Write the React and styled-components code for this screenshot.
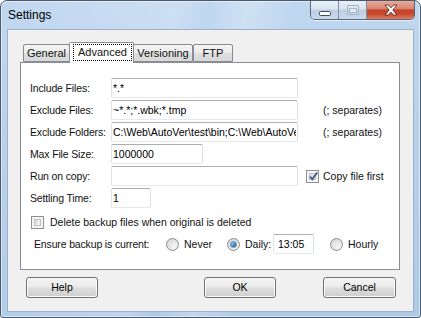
import styled, { createGlobalStyle } from 'styled-components';

const GlobalStyle = createGlobalStyle`
  html, body {
    margin: 0;
    padding: 0;
    background: #ffffff;
  }
  body {
    font-family: "Liberation Sans", Arial, sans-serif;
    color: #000;
  }
  * { box-sizing: border-box; }
`;

const Window = styled.div`
  width: 421px;
  height: 318px;
  display: flex;
  flex-direction: column;
  border: 1px solid #4a5b70;
  border-radius: 7px 7px 3px 3px;
  padding: 0 6px 5px 6px;
  background:
    linear-gradient(100deg, rgba(255,255,255,0) 0%, rgba(255,255,255,0.2) 38%, rgba(255,255,255,0) 44%, rgba(255,255,255,0.25) 52%, rgba(255,255,255,0) 62%),
    linear-gradient(180deg, #c0d7f0 0%, #b8d1eb 40%, #aec9e6 100%);
  box-shadow: inset 0 0 0 1px rgba(255, 255, 255, 0.5);
`;

const TitleBar = styled.div`
  height: 28px;
  display: flex;
  align-items: flex-start;
`;

const Title = styled.div`
  padding: 6px 0 0 1px;
  font-size: 12px;
  line-height: 16px;
  color: #000;
`;

const CaptionButtons = styled.div`
  margin-left: auto;
  margin-right: -1px;
  display: flex;
  height: 19px;
  border: 1px solid #56677d;
  border-top: none;
  border-radius: 0 0 5px 5px;
  overflow: hidden;
  box-shadow: 0 1px 0 rgba(255, 255, 255, 0.6);
`;

const CaptionButton = styled.div`
  width: ${p => p.$w}px;
  height: 100%;
  display: flex;
  align-items: center;
  justify-content: center;
  border-left: ${p => (p.$first ? 'none' : '1px solid #7d8fa6')};
  background: ${p =>
    p.$close
      ? 'linear-gradient(180deg, #e9ab9c 0%, #d98672 42%, #c6432a 50%, #c9492d 72%, #e07c5c 100%)'
      : 'linear-gradient(180deg, #eaf0f7 0%, #d9e3ef 45%, #bfcfe1 50%, #c9d8ea 100%)'};
`;

const Client = styled.div`
  flex: 1;
  display: flex;
  flex-direction: column;
  background: #f0f0f0;
  border: 1px solid #9db1c9;
  padding: 12px 13px 13px 12px;
`;

const TabRow = styled.div`
  height: 20px;
  display: flex;
  align-items: flex-end;
  padding-left: 3px;
  position: relative;
  z-index: 1;
`;

const Tab = styled.div`
  width: ${p => p.$w}px;
  height: ${p => (p.$active ? 21 : 18)}px;
  margin: 0 ${p => (p.$active ? -1 : 0)}px ${p => (p.$active ? -1 : 0)}px ${p => (p.$active ? -1 : 0)}px;
  display: flex;
  align-items: ${p => (p.$active ? 'stretch' : 'center')};
  justify-content: center;
  padding: ${p => (p.$active ? '1px 1px 2px 3px' : '0 0 1px 0')};
  border: 1px solid #898c95;
  border-bottom: ${p => (p.$active ? 'none' : '1px solid #898c95')};
  border-radius: 2px 2px 0 0;
  background: ${p =>
    p.$active ? '#ffffff' : 'linear-gradient(180deg, #f4f4f4 0%, #ebebeb 50%, #dfdfdf 51%, #d8d8d8 100%)'};
  position: relative;
  z-index: ${p => (p.$active ? 2 : 1)};
  font-size: 11px;
  line-height: 14px;
  color: #111;
`;

const FocusRing = styled.span`
  flex: 1;
  display: flex;
  align-items: center;
  justify-content: center;
  border: 1px dotted #000;
  padding-bottom: 1px;
`;

const Panel = styled.div`
  height: 208px;
  display: flex;
  flex-direction: column;
  background: #ffffff;
  border: 1px solid #898c95;
  padding: 15px 0 0 9px;
`;

const Row = styled.div`
  height: 20px;
  display: flex;
  align-items: center;
  margin-bottom: 2px;
  font-size: 10.5px;
  color: #111;
`;

const Label = styled.span`
  width: ${p => p.$w || 81}px;
  margin-left: ${p => p.$ml || 0}px;
  flex-shrink: 0;
  white-space: nowrap;
  letter-spacing: -0.15px;
`;

const TextBox = styled.input`
  width: ${p => p.$w}px;
  height: 20px;
  flex-shrink: 0;
  border: 1px solid;
  border-color: #abadb3 #dbdfe6 #e3e9ef #e2e3ea;
  border-radius: 2px;
  padding: 0 1px 0 ${p => p.$pl || 1}px;
  font-family: "Liberation Sans", Arial, sans-serif;
  font-size: 10.5px;
  color: #000;
  background: #fff;
  outline: none;
`;

const Aside = styled.span`
  margin-left: ${p => p.$ml}px;
  white-space: nowrap;
`;

const CheckRow = styled.label`
  height: 16px;
  margin-top: ${p => p.$mt || 0}px;
  margin-left: ${p => p.$ml || 0}px;
  display: flex;
  align-items: center;
  gap: ${p => p.$gap || 6}px;
  font-size: 10.5px;
  color: #111;
  white-space: nowrap;
`;

const Box = styled.span`
  width: 13px;
  height: 13px;
  flex-shrink: 0;
  border: 1px solid #8e8f8f;
  background: #f4f4f4;
  padding: 2px;
  display: flex;
`;

const BoxInner = styled.span`
  flex: 1;
  position: relative;
  background: linear-gradient(135deg, #d3d6db 0%, #e8eaec 55%, #f9f9f9 100%);
  border: 1px solid #c0c2c6;
`;

const Check = styled.svg`
  position: absolute;
  left: -2px;
  top: -3px;
`;

const EnsureRow = styled.div`
  height: 20px;
  margin-top: 4px;
  display: flex;
  align-items: center;
  font-size: 10.5px;
  color: #111;
`;

const RadioOption = styled.label`
  width: ${p => p.$w || 'auto'};
  margin-left: ${p => p.$ml || 0}px;
  display: flex;
  align-items: center;
  gap: 5px;
  flex-shrink: 0;
  white-space: nowrap;
`;

const Radio = styled.span`
  width: 13px;
  height: 13px;
  border-radius: 50%;
  border: 1px solid #8e8f8f;
  background: radial-gradient(circle at 65% 70%, #f6f6f6 0%, #e2e2e2 55%, #c9cbce 100%);
  display: flex;
  align-items: center;
  justify-content: center;
  flex-shrink: 0;
`;

const RadioDot = styled.span`
  width: 5px;
  height: 5px;
  border-radius: 50%;
  background: radial-gradient(circle at 35% 35%, #8ad0f5 0%, #2f86c6 45%, #0d3a66 100%);
  box-shadow: 0 0 0 1px rgba(30, 60, 100, 0.45);
`;

const ButtonRow = styled.div`
  height: 21px;
  margin-top: 7px;
  display: flex;
  padding-left: 6px;
`;

const Button = styled.button`
  width: ${p => p.$w || 72}px;
  height: 21px;
  margin-left: ${p => p.$ml || 0}px;
  flex-shrink: 0;
  border: 1px solid #707070;
  border-radius: 3px;
  background: linear-gradient(180deg, #f2f2f2 0%, #ebebeb 48%, #dddddd 52%, #cfcfcf 100%);
  box-shadow: inset 0 0 0 1px #fbfbfb;
  font-family: "Liberation Sans", Arial, sans-serif;
  font-size: 10.5px;
  color: #000;
  padding: 0 0 1px 0;
`;

const Minimize = () => (
  <svg width="12" height="6" viewBox="0 0 12 6" style={{ marginTop: 7 }}>
    <rect x="0.5" y="0.5" width="11" height="4" rx="1" fill="#ffffff" stroke="#3b4a5e" />
  </svg>
);

const Maximize = () => (
  <svg width="12" height="10" viewBox="0 0 12 10">
    <rect x="0.5" y="0.5" width="11" height="9" fill="none" stroke="#a9b8c9" />
    <rect x="2.5" y="3.5" width="7" height="4" fill="#e2e9f1" stroke="#a9b8c9" />
  </svg>
);

const Close = () => (
  <svg width="14" height="12" viewBox="0 0 14 12">
    <path
      d="M1 1 H4.5 L7 3.8 L9.5 1 H13 L8.8 6 L13 11 H9.5 L7 8.2 L4.5 11 H1 L5.2 6 Z"
      fill="#ffffff"
      stroke="#5a2a22"
      strokeWidth="0.9"
      strokeLinejoin="round"
    />
  </svg>
);

const CheckBox = ({ checked }) => (
  <Box>
    <BoxInner>
      {checked && (
        <Check width="11" height="11" viewBox="0 0 11 11">
          <path d="M2 5.5 L4.3 8.3 L9.2 1.5" fill="none" stroke="#3d5a8f" strokeWidth="1.9" />
        </Check>
      )}
    </BoxInner>
  </Box>
);

const RadioButton = ({ checked }) => <Radio>{checked && <RadioDot />}</Radio>;

export default function App() {
  return (
    <>
      <GlobalStyle />
      <Window>
        <TitleBar>
          <Title>Settings</Title>
          <CaptionButtons>
            <CaptionButton $w={27} $first>
              <Minimize />
            </CaptionButton>
            <CaptionButton $w={28}>
              <Maximize />
            </CaptionButton>
            <CaptionButton $w={48} $close>
              <Close />
            </CaptionButton>
          </CaptionButtons>
        </TitleBar>
        <Client>
          <TabRow>
            <Tab $w={47}>General</Tab>
            <Tab $w={65} $active>
              <FocusRing>Advanced</FocusRing>
            </Tab>
            <Tab $w={60}>Versioning</Tab>
            <Tab $w={40}>FTP</Tab>
          </TabRow>
          <Panel>
            <Row>
              <Label>Include Files:</Label>
              <TextBox $w={187} defaultValue="*.*" />
            </Row>
            <Row>
              <Label>Exclude Files:</Label>
              <TextBox $w={187} defaultValue="~*.*;*.wbk;*.tmp" />
              <Aside $ml={25}>(; separates)</Aside>
            </Row>
            <Row>
              <Label>Exclude Folders:</Label>
              <TextBox $w={187} defaultValue="C:\Web\AutoVer\test\bin;C:\Web\AutoVer\test\obj" />
              <Aside $ml={25}>(; separates)</Aside>
            </Row>
            <Row>
              <Label>Max File Size:</Label>
              <TextBox $w={92} defaultValue="1000000" />
            </Row>
            <Row>
              <Label>Run on copy:</Label>
              <TextBox $w={187} defaultValue="" />
              <CheckRow $ml={8} $gap={4}>
                <CheckBox checked />
                Copy file first
              </CheckRow>
            </Row>
            <Row>
              <Label>Settling Time:</Label>
              <TextBox $w={40} defaultValue="1" />
            </Row>
            <CheckRow $mt={4} $ml={1}>
              <CheckBox />
              Delete backup files when original is deleted
            </CheckRow>
            <EnsureRow>
              <Label $w={132} $ml={4}>Ensure backup is current:</Label>
              <RadioOption $w="61px">
                <RadioButton />
                Never
              </RadioOption>
              <RadioOption $w="46px">
                <RadioButton checked />
                Daily:
              </RadioOption>
              <TextBox $w={41} $pl={4} defaultValue="13:05" />
              <RadioOption $ml={16}>
                <RadioButton />
                Hourly
              </RadioOption>
            </EnsureRow>
          </Panel>
          <ButtonRow>
            <Button>Help</Button>
            <Button $ml={106}>OK</Button>
            <Button $ml={47} $w={73}>Cancel</Button>
          </ButtonRow>
        </Client>
      </Window>
    </>
  );
}
